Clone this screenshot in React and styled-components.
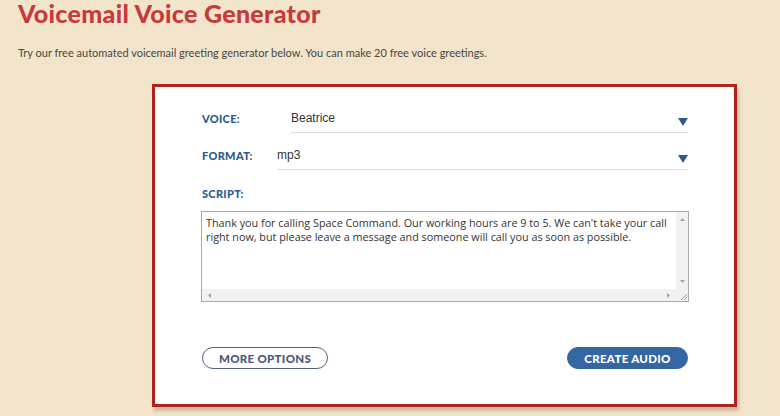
import React from "react";
import styled, { createGlobalStyle } from "styled-components";

const GlobalStyle = createGlobalStyle`
  html, body {
    margin: 0;
    padding: 0;
    background: #f2e4cb;
  }
  body {
    font-family: Lato, "Open Sans", sans-serif;
  }
`;

const Page = styled.div`
  width: 780px;
  height: 416px;
  overflow: hidden;
  padding-left: 18px;
  box-sizing: border-box;
`;

const Title = styled.h1`
  margin: 0;
  font-family: Lato, sans-serif;
  font-weight: 900;
  font-size: 25px;
  line-height: 26px;
  letter-spacing: 0.3px;
  color: #c63a3b;
`;

const Intro = styled.p`
  margin: 20px 0 0;
  font-family: Lato, sans-serif;
  font-size: 11px;
  line-height: 14px;
  color: #4a4640;
`;

const Card = styled.div`
  margin: 24px 0 0 134px;
  width: 585px;
  height: 323px;
  box-sizing: border-box;
  background: #fff;
  border: 3px solid #b3211d;
  box-shadow: 2px 4px 3px rgba(90, 70, 40, 0.25);
  padding: 20px 46px 0 47px;
  display: flex;
  flex-direction: column;
`;

const Row = styled.div`
  display: flex;
  align-items: stretch;
  height: 26px;
  margin-top: ${(p) => p.$gap || 0}px;
`;

const Label = styled.label`
  width: ${(p) => p.$width || 80}px;
  flex-shrink: 0;
  display: flex;
  align-items: center;
  padding-bottom: 4px;
  box-sizing: border-box;
  font-family: Lato, sans-serif;
  font-weight: 900;
  font-size: 11px;
  letter-spacing: 0.3px;
  color: #2d5a8e;
`;

const Select = styled.div`
  flex: 1;
  display: flex;
  align-items: center;
  justify-content: space-between;
  padding-bottom: 4px;
  border-bottom: 1px solid #dcdcdc;
  font-family: "Liberation Sans", Arial, sans-serif;
  font-size: 12px;
  color: #333;
`;

const Caret = styled.svg`
  width: 10px;
  height: 8px;
  margin-top: 8px;
  fill: #2d5a8e;
`;

const ScriptLabel = styled(Label)`
  height: 14px;
  padding-bottom: 0;
  margin-top: 16px;
`;

const Script = styled.div`
  margin-top: 11px;
  margin-left: -1px;
  margin-right: -1px;
  height: 91px;
  box-sizing: border-box;
  border: 1px solid #a9a9a9;
  display: grid;
  grid-template-columns: 1fr 12px;
  grid-template-rows: 1fr 12px;
`;

const Text = styled.textarea`
  border: none;
  outline: none;
  resize: none;
  overflow: hidden;
  padding: 4px 4px;
  margin: 0;
  font-family: "Open Sans", sans-serif;
  font-size: 10.8px;
  line-height: 14px;
  color: #333;
  background: #fff;
`;

const Track = styled.div`
  background: #f1f1f1;
  display: flex;
  flex-direction: ${(p) => (p.$vertical ? "column" : "row")};
  justify-content: space-between;
  align-items: center;
  padding: ${(p) => (p.$vertical ? "5px 0" : "0 5px")};
  box-sizing: border-box;
`;

const Arrow = styled.svg`
  width: 5px;
  height: 5px;
  fill: #a3a3a3;
`;

const Corner = styled.div`
  background: #f1f1f1;
  display: flex;
  align-items: flex-end;
  justify-content: flex-end;
`;

const Buttons = styled.div`
  margin-top: 45px;
  display: flex;
  justify-content: space-between;
`;

const Button = styled.button`
  height: 22px;
  width: ${(p) => p.$width}px;
  box-sizing: border-box;
  border-radius: 11px;
  border: 1.5px solid ${(p) => (p.$primary ? "#3566a4" : "#56617f")};
  background: ${(p) => (p.$primary ? "#3566a4" : "#fff")};
  color: ${(p) => (p.$primary ? "#fff" : "#4e5a78")};
  font-family: Lato, sans-serif;
  font-weight: 900;
  font-size: 11.5px;
  letter-spacing: 0.3px;
  padding: 0;
  cursor: pointer;
`;

const caret = (
  <Caret viewBox="0 0 10 8">
    <path d="M0 0h10L5 8z" />
  </Caret>
);

export default function App() {
  return (
    <>
      <GlobalStyle />
      <Page>
        <Title>Voicemail Voice Generator</Title>
        <Intro>
          Try our free automated voicemail greeting generator below. You can
          make 20 free voice greetings.
        </Intro>
        <Card>
          <Row>
            <Label $width={89}>VOICE:</Label>
            <Select>
              Beatrice
              {caret}
            </Select>
          </Row>
          <Row $gap={11}>
            <Label $width={75}>FORMAT:</Label>
            <Select>
              mp3
              {caret}
            </Select>
          </Row>
          <ScriptLabel>SCRIPT:</ScriptLabel>
          <Script>
            <Text
              defaultValue="Thank you for calling Space Command. Our working hours are 9 to 5. We can't take your call right now, but please leave a message and someone will call you as soon as possible."
            />
            <Track $vertical>
              <Arrow viewBox="0 0 5 5">
                <path d="M0 4h5L2.5 1z" />
              </Arrow>
              <Arrow viewBox="0 0 5 5">
                <path d="M0 1h5L2.5 4z" />
              </Arrow>
            </Track>
            <Track>
              <Arrow viewBox="0 0 5 5">
                <path d="M4 0v5L1 2.5z" />
              </Arrow>
              <Arrow viewBox="0 0 5 5">
                <path d="M1 0v5L4 2.5z" />
              </Arrow>
            </Track>
            <Corner>
              <svg width="10" height="10" viewBox="0 0 10 10">
                <path d="M9 3L3 9M9 6L6 9" stroke="#999" strokeWidth="1" />
              </svg>
            </Corner>
          </Script>
          <Buttons>
            <Button $width={126}>MORE OPTIONS</Button>
            <Button $width={121} $primary>
              CREATE AUDIO
            </Button>
          </Buttons>
        </Card>
      </Page>
    </>
  );
}
